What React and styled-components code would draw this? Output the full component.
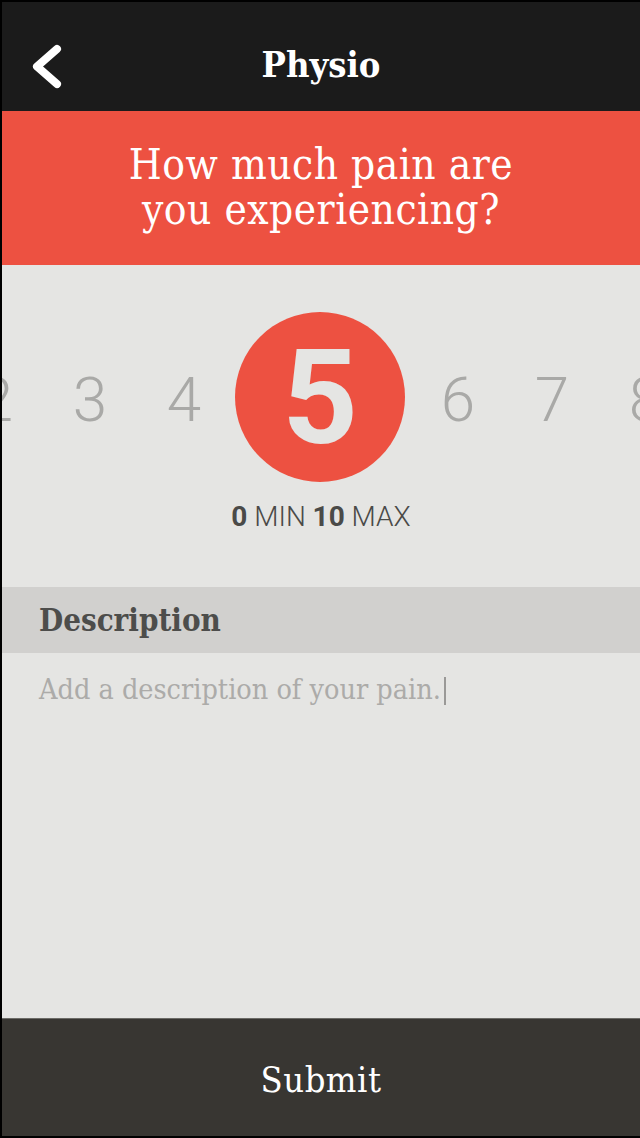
import React from 'react'
import styled, { createGlobalStyle } from 'styled-components'

const GlobalStyle = createGlobalStyle`
  html, body {
    margin: 0;
    padding: 0;
    background: #000;
  }
  * {
    box-sizing: border-box;
  }
`

const slab = `'DejaVu Serif', 'Liberation Serif', serif`

const App = () => (
  <>
    <GlobalStyle />
    <Screen>
      <Header>
        <BackButton aria-label='back'>
          <svg width='40' height='50' viewBox='0 0 40 50'>
            <polyline
              points='26,7 6,24.5 26,42'
              fill='none'
              stroke='#fff'
              strokeWidth='8'
              strokeLinecap='round'
              strokeLinejoin='round'
            />
          </svg>
        </BackButton>
        <Title>Physio</Title>
      </Header>
      <Question>
        How much pain are
        <br />
        you experiencing?
      </Question>
      <Picker>
        <Scale>
          <Num>2</Num>
          <Num>3</Num>
          <Num>4</Num>
          <Selected>5</Selected>
          <Num>6</Num>
          <Num>7</Num>
          <Num>8</Num>
        </Scale>
        <Range>
          <b>0</b> MIN <b>10</b> MAX
        </Range>
      </Picker>
      <SectionBar>Description</SectionBar>
      <DescriptionArea>
        <Placeholder>Add a description of your pain.</Placeholder>
        <Caret />
      </DescriptionArea>
      <SubmitBar>Submit</SubmitBar>
    </Screen>
  </>
)

const Screen = styled.div`
  display: flex;
  flex-direction: column;
  height: 100vh;
  background: #e5e5e3;
  border-left: 2px solid #000;
  border-top: 2px solid #000;
  border-bottom: 2px solid #000;
  overflow: hidden;
`

const Header = styled.header`
  position: relative;
  height: 109px;
  flex-shrink: 0;
  background: #1b1b1b;
  display: flex;
  align-items: center;
  justify-content: center;
`

const BackButton = styled.div`
  position: absolute;
  left: 29px;
  top: 40px;
  width: 40px;
  height: 50px;
  display: flex;
`

const Title = styled.h1`
  margin: 14px 0 0;
  font-family: ${slab};
  font-stretch: condensed;
  font-weight: 700;
  font-size: 36px;
  color: #fff;
`

const Question = styled.div`
  height: 154px;
  flex-shrink: 0;
  background: #ed5141;
  display: flex;
  align-items: center;
  justify-content: center;
  text-align: center;
  font-family: ${slab};
  font-stretch: condensed;
  font-weight: 300;
  font-size: 42px;
  letter-spacing: 0.5px;
  line-height: 45px;
  color: #fff;
  padding-bottom: 2px;
`

const Picker = styled.div`
  height: 322px;
  flex-shrink: 0;
  display: flex;
  flex-direction: column;
  align-items: center;
  padding-top: 47px;
`

const Scale = styled.div`
  width: 100%;
  display: flex;
  justify-content: center;
  align-items: center;
  overflow: hidden;
`

const Num = styled.div`
  flex-shrink: 0;
  width: 94px;
  text-align: center;
  font-family: Roboto, sans-serif;
  font-weight: 300;
  font-size: 62px;
  color: #a9a9a7;
  margin-top: 4px;
`

const Selected = styled.div`
  flex-shrink: 0;
  width: 170px;
  height: 170px;
  margin: 0 6px 0 4px;
  border-radius: 50%;
  background: #ed5141;
  display: flex;
  align-items: center;
  justify-content: center;
  font-family: Roboto, sans-serif;
  font-weight: 700;
  font-size: 132px;
  line-height: 1;
  color: #e5e5e3;
  padding-top: 2px;
`

const Range = styled.div`
  margin-top: 18px;
  font-family: Roboto, sans-serif;
  font-weight: 300;
  font-size: 28px;
  color: #4a4a48;

  b {
    font-weight: 700;
  }
`

const SectionBar = styled.div`
  height: 66px;
  flex-shrink: 0;
  background: #d1d0ce;
  display: flex;
  align-items: center;
  padding-left: 37px;
  font-family: ${slab};
  font-stretch: condensed;
  font-weight: 700;
  font-size: 31px;
  color: #4d4d4b;
`

const DescriptionArea = styled.div`
  flex: 1;
  padding: 19px 0 0 37px;
  display: flex;
  align-items: flex-start;
`

const Placeholder = styled.span`
  font-family: ${slab};
  font-stretch: condensed;
  font-weight: 300;
  font-size: 28.5px;
  line-height: 36px;
  color: #acaba9;
`

const Caret = styled.span`
  width: 2px;
  height: 28px;
  margin: 5px 0 0 3px;
  background: #9a9997;
`

const SubmitBar = styled.div`
  height: 118px;
  flex-shrink: 0;
  background: #383632;
  border-top: 1px solid #6c6b67;
  display: flex;
  align-items: center;
  justify-content: center;
  font-family: ${slab};
  font-stretch: condensed;
  font-size: 36px;
  letter-spacing: 0.5px;
  color: #fff;
  padding-top: 4px;
`

export default App
